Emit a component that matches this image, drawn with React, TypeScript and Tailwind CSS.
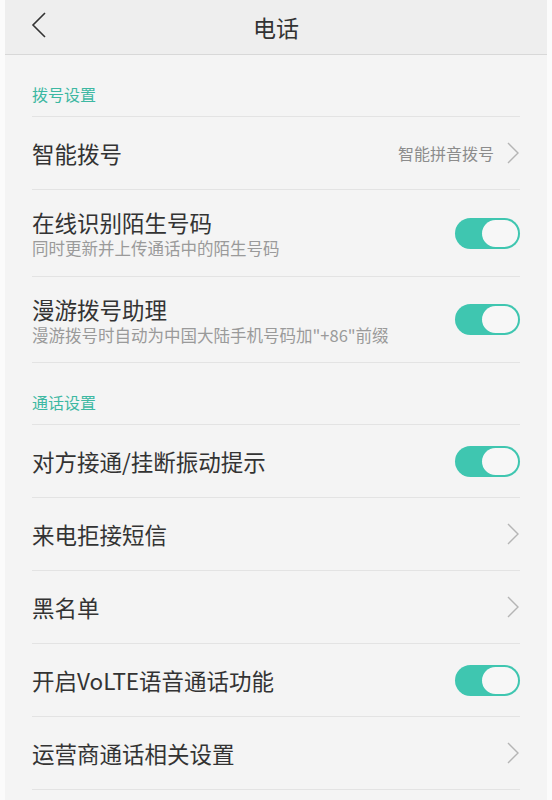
import type { ReactNode } from 'react'

const font = { fontFamily: '"Noto Sans CJK SC", "Noto Sans", sans-serif' }

function Chevron() {
  return (
    <svg width="14" height="24" viewBox="0 0 14 24" className="shrink-0">
      <path d="M2 2 L12 12 L2 22" fill="none" stroke="#b5b5b5" strokeWidth="1.4" />
    </svg>
  )
}

function Toggle() {
  return (
    <div className="flex h-[31px] w-[65px] shrink-0 items-center justify-end rounded-full bg-[#3fc6b0] p-[2px]">
      <div className="h-[27px] w-[36px] rounded-full bg-[#f7f7f7]" />
    </div>
  )
}

function SectionHeader({ label, h }: { label: string; h: string }) {
  return (
    <div
      className={[
        'flex items-end border-b border-[#e3e3e3] pb-[10px] text-[16px] text-[#3db8a2]',
        h,
      ].join(' ')}
    >
      {label}
    </div>
  )
}

function Row({
  title,
  subtitle,
  right,
  h = 'h-[73px]',
}: {
  title: string
  subtitle?: string
  right: ReactNode
  h?: string
}) {
  return (
    <div className={['flex items-center justify-between border-b border-[#e3e3e3]', h].join(' ')}>
      <div className="flex flex-col">
        <span className="text-[22.5px] leading-[30px] text-[#333333]">{title}</span>
        {subtitle && (
          <span className="text-[16.5px] leading-[22px] text-[#9a9a9a]">{subtitle}</span>
        )}
      </div>
      {right}
    </div>
  )
}

export default function App() {
  return (
    <div className="min-h-screen bg-[#fbfbfb] px-[5px]" style={font}>
      <div className="min-h-[800px] bg-[#f4f4f4]">
        <header className="relative flex h-[55px] items-center justify-center border-b border-[#d8d8d8] bg-[#eeeeee]">
          <svg
            width="16"
            height="28"
            viewBox="0 0 16 28"
            className="absolute left-[26px] top-[11px]"
          >
            <path d="M14 2 L2 14 L14 26" fill="none" stroke="#333" strokeWidth="1.6" />
          </svg>
          <h1 className="text-[23px] text-[#333333]">电话</h1>
        </header>
        <div className="pl-[27px] pr-[27px]">
          <SectionHeader label="拨号设置" h="h-[62px]" />
          <Row
            title="智能拨号"
            right={
              <div className="flex items-center gap-[12px] text-[16px] text-[#8c8c8c]">
                <span>智能拼音拨号</span>
                <Chevron />
              </div>
            }
          />
          <Row
            title="在线识别陌生号码"
            subtitle="同时更新并上传通话中的陌生号码"
            right={<Toggle />}
            h="h-[87px]"
          />
          <Row
            title="漫游拨号助理"
            subtitle={'漫游拨号时自动为中国大陆手机号码加"+86"前缀'}
            right={<Toggle />}
            h="h-[86px]"
          />
          <SectionHeader label="通话设置" h="h-[62px]" />
          <Row title="对方接通/挂断振动提示" right={<Toggle />} />
          <Row title="来电拒接短信" right={<Chevron />} />
          <Row title="黑名单" right={<Chevron />} />
          <Row title="开启VoLTE语音通话功能" right={<Toggle />} />
          <Row title="运营商通话相关设置" right={<Chevron />} />
        </div>
      </div>
    </div>
  )
}
